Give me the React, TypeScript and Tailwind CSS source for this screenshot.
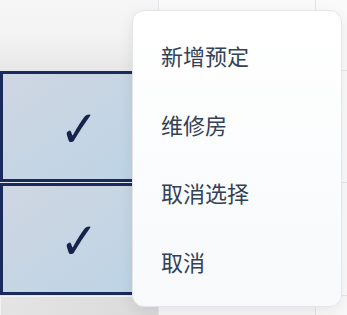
import React from 'react';

const menuItems = ['新增预定', '维修房', '取消选择', '取消'];

function SelectedCell() {
  return (
    <div className="flex items-center justify-center border-[3px] border-[#1b2a5c] bg-gradient-to-br from-[#cfd6e2] to-[#bcd4e6]">
      <span className="mt-[4px] scale-y-[1.12] text-[46px] font-bold leading-none text-[#17224d] font-['DejaVu_Sans',sans-serif]">✓</span>
    </div>
  );
}

export default function App() {
  return (
    <div className="relative h-[315px] w-[347px] overflow-hidden bg-[#fafafa] font-['Noto_Sans_CJK_SC','Noto_Sans',sans-serif]">
      <div className="grid h-full grid-cols-[158px_156px_1fr] grid-rows-[70px_111px_112px_1fr] gap-px bg-[#e4e6ea]">
        <div className="bg-gradient-to-b from-[#f6f6f6] via-[#f3f3f3] to-[#e7e7e8]" />
        <div className="bg-[#fafafa]" />
        <div className="bg-[#fafafa]" />

        <SelectedCell />
        <div className="bg-white" />
        <div className="bg-[#fbfbfb]" />

        <SelectedCell />
        <div className="bg-white" />
        <div className="bg-[#fbfbfb]" />

        <div className="border-l border-t border-[#f2f2f2] bg-gradient-to-r from-[#e4e4e4] to-[#dadada]" />
        <div className="bg-[#f7f7f7]" />
        <div className="bg-[#f9f9f9]" />
      </div>

      <div className="absolute left-[132px] top-[10px] flex h-[297px] w-[210px] flex-col rounded-[12px] border border-[#e3e5e8] bg-gradient-to-b from-white to-[#f7f9fb] py-[10px] shadow-[0_4px_14px_rgba(0,0,0,0.08)]">
        {menuItems.map((item) => (
          <div key={item} className="flex h-[69px] items-center pl-[28px] text-[22px] text-[#334155]">
            {item}
          </div>
        ))}
      </div>
    </div>
  );
}
